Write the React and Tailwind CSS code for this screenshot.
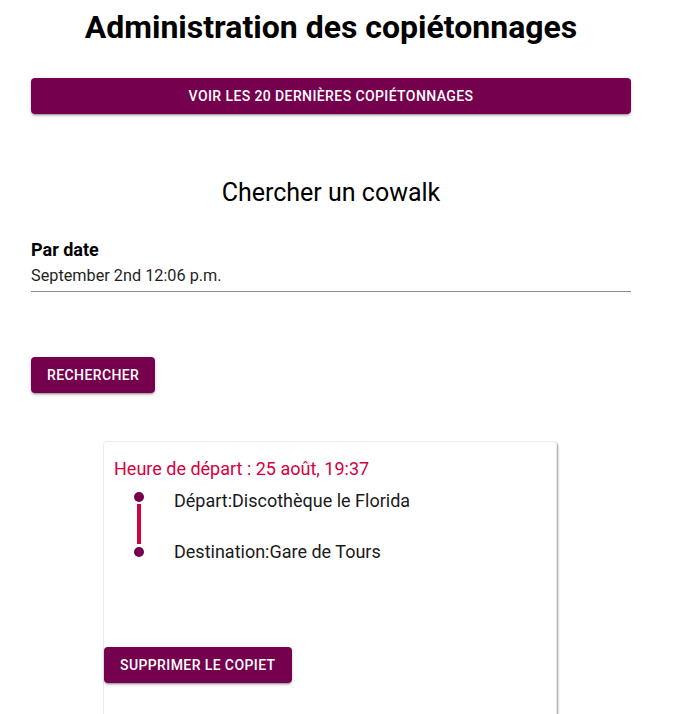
import React from "react";

export default function App() {
  const btn =
    "bg-[#75004e] text-white uppercase font-medium text-[14px] tracking-[0.4px] rounded-[4px] shadow-[0_3px_1px_-2px_rgba(0,0,0,0.2),0_2px_2px_0_rgba(0,0,0,0.14),0_1px_5px_0_rgba(0,0,0,0.12)] h-[36px] px-4";
  return (
    <div className="w-[662px] bg-white text-black" style={{ fontFamily: "Roboto, sans-serif" }}>
      <h1 className="text-center text-[32px] font-bold leading-[38px] pt-[8px]">
        Administration des copiétonnages
      </h1>
      <div className="px-[31px] mt-[32px]">
        <button className={`${btn} w-full block`}>Voir les 20 dernières copiétonnages</button>
      </div>
      <h2 className="text-center text-[25px] leading-[32px] mt-[63px]">Chercher un cowalk</h2>
      <div className="px-[31px] mt-[29px]">
        <div className="font-bold text-[18px] leading-[24px]">Par date</div>
        <div className="border-b border-[#8c8c8c] text-[16.25px] leading-[20px] pt-[4px] pb-[5px] text-[#1f1f1f]">
          September 2nd 12:06 p.m.
        </div>
        <button className={`${btn} mt-[65px]`}>Rechercher</button>
      </div>
      <div className="ml-[103px] mt-[48px] w-[454px] h-[300px] rounded-[4px] bg-white border border-[#ececec] shadow-[2px_1px_2px_-1px_rgba(0,0,0,0.4)] flex flex-col">
        <div className="pl-[10px] pt-[15px] text-[18px] leading-[24px] text-[#d5003f]">
          Heure de départ : 25 août, 19:37
        </div>
        <div className="flex pl-[30px] mt-[11px]">
          <div className="flex flex-col items-center w-[10px]">
            <div className="w-[10px] h-[10px] rounded-full bg-[#75004e]"></div>
            <div className="w-[4px] h-[40px] bg-[#d5003f] mt-[2px]"></div>
            <div className="w-[10px] h-[10px] rounded-full bg-[#75004e] mt-[3px]"></div>
          </div>
          <div className="ml-[30px] text-[18px] leading-[24px] text-[#1a1a1a]">
            <div className="-mt-[3px]">Départ:Discothèque le Florida</div>
            <div className="mt-[27px]">Destination:Gare de Tours</div>
          </div>
        </div>
        <div className="mt-[83px]">
          <button className={btn}>Supprimer le copiet</button>
        </div>
      </div>
    </div>
  );
}
